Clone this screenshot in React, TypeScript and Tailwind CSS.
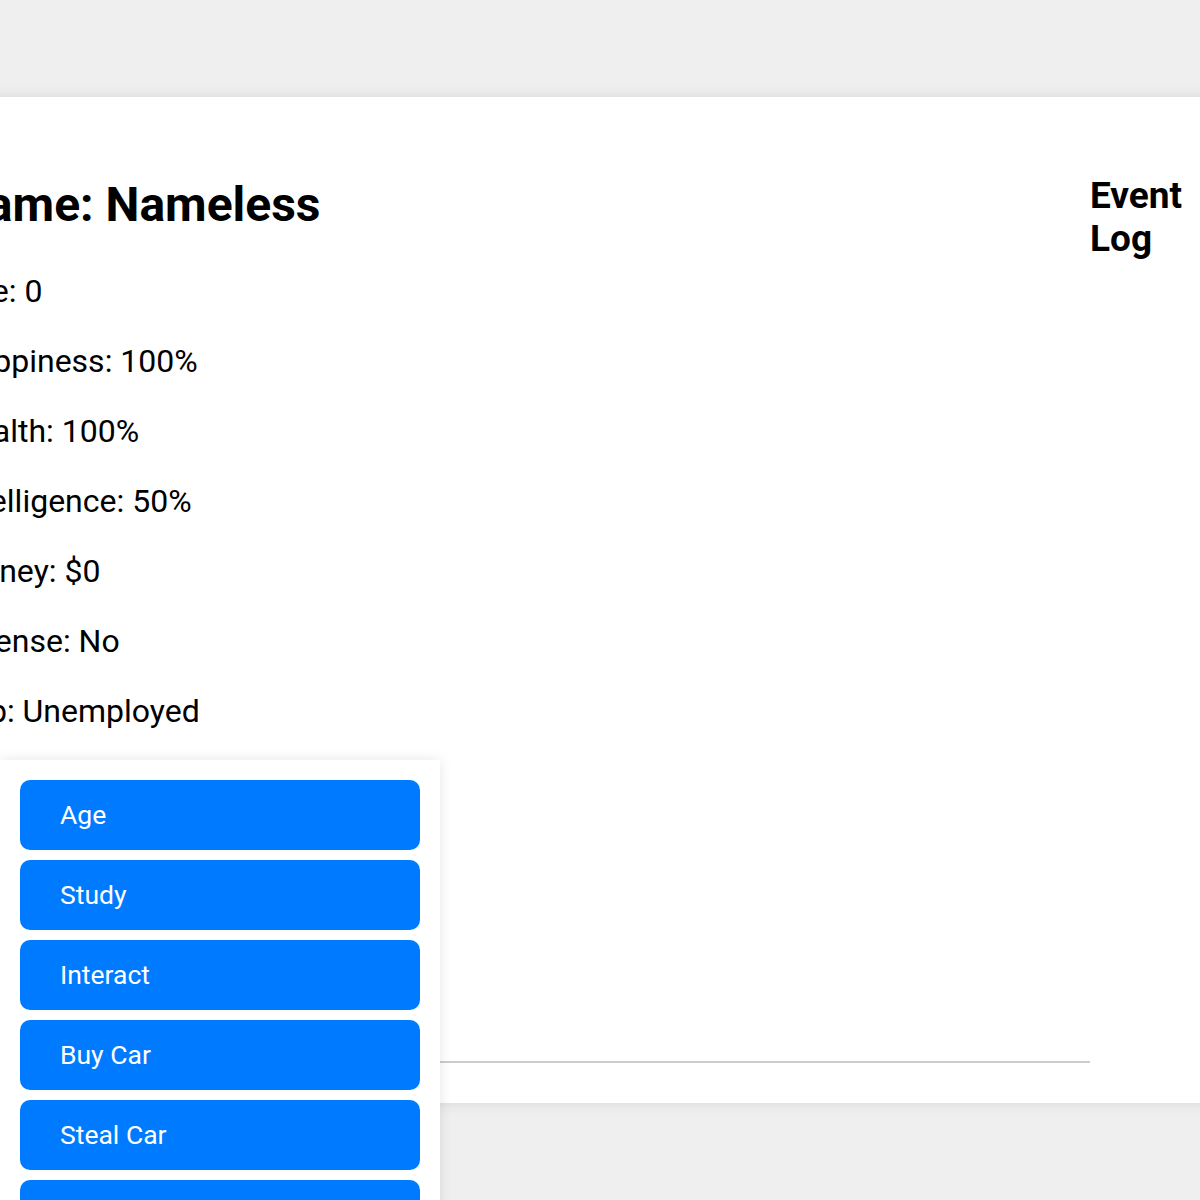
import React from "react";

const stats = [
  "Age: 0",
  "Happiness: 100%",
  "Health: 100%",
  "Intelligence: 50%",
  "Money: $0",
  "License: No",
  "Job: Unemployed",
];

const actions = ["Age", "Study", "Interact", "Buy Car", "Steal Car", "Work"];

export default function App() {
  return (
    <div className="relative h-[1200px] overflow-hidden bg-[#efefef] font-['Roboto',sans-serif] text-black">
      <div className="h-[97px]" />
      <div className="ml-[-47px] mr-[-60px] flex h-[1006px] bg-white shadow-[0_0_14px_rgba(0,0,0,0.10)]">
        <div className="flex w-[1137px] flex-col">
          <h1 className="mt-[78px] text-[48px] font-bold leading-[60px]">Name: Nameless</h1>
          <div className="mt-[36px] flex flex-col gap-[30px]">
            {stats.map((s) => (
              <p key={s} className="text-[32px] leading-[40px]">
                {s}
              </p>
            ))}
          </div>
          <div className="mt-auto mb-[40px] h-[2px] bg-[#cccccc]" />
        </div>
        <div className="w-[130px] pt-[77px]">
          <h2 className="text-[37px] font-bold leading-[43px]">Event Log</h2>
        </div>
      </div>

      <div className="absolute left-0 top-[760px] flex w-[440px] flex-col gap-[10px] bg-white p-[20px] shadow-[0_0_12px_rgba(0,0,0,0.10)]">
        {actions.map((a) => (
          <button
            key={a}
            className="h-[70px] w-[400px] rounded-[10px] bg-[#007bff] pl-[40px] text-left text-[26.5px] text-white"
          >
            {a}
          </button>
        ))}
      </div>
    </div>
  );
}
